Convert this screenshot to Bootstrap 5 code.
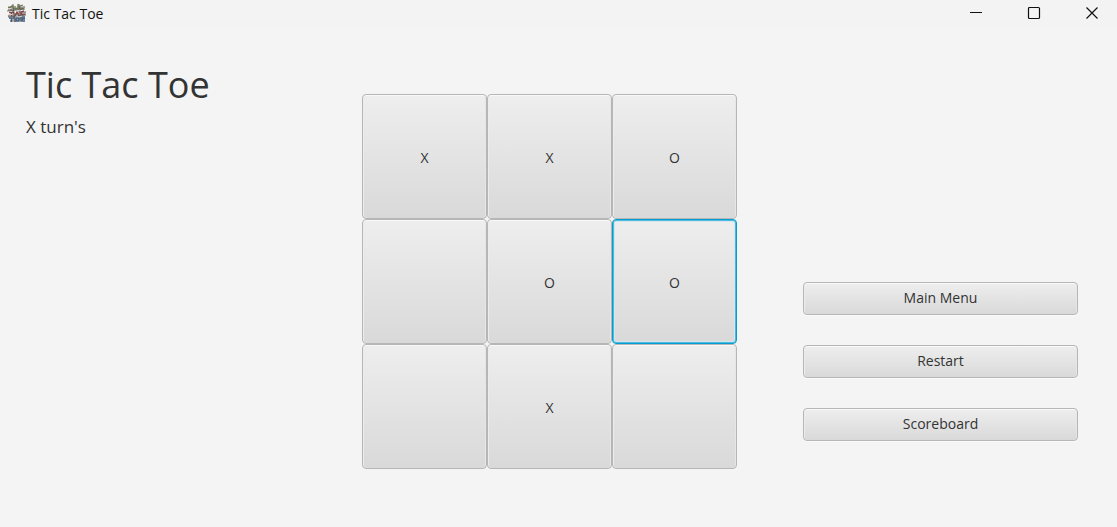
<!DOCTYPE html>
<html lang="en">
<head>
<meta charset="utf-8">
<meta name="viewport" content="width=device-width, initial-scale=1">
<title>Tic Tac Toe</title>
<link href="https://cdn.jsdelivr.net/npm/bootstrap@5.3.0/dist/css/bootstrap.min.css" rel="stylesheet">
<style>
  body { background: #f4f4f4; color: #333; font-family: "Open Sans", "Noto Sans", sans-serif; font-size: 14px; }
  .titlebar { background: #f3f3f3; height: 26px; color: #111; padding-left: 7px; }
  .titlebar-name { font-size: 14px; line-height: 24px; padding-top: 2px; margin-left: 5px; }
  .win-btns { gap: 8px; }
  .win-btn { width: 50px; height: 26px; color: #111; }
  .game { padding: 0 39px 0 26px; }
  .game-title { font-size: 36px; line-height: 50px; font-weight: 400; margin: 34px 0 0; }
  .turn { font-size: 17px; line-height: 24px; margin: 5px 0 0; }
  .board { grid-template-columns: repeat(3, 125px); grid-auto-rows: 125px; margin-top: 68px; margin-right: 66px; }
  .fx-btn {
    color: #333; font-size: 14px; line-height: 20px; padding: 0;
    border: 1px solid #b6b6b6; border-radius: 4px;
    background: linear-gradient(#eee, #d9d9d9);
    box-shadow: inset 0 1px #f9f9f9, inset 1px 0 #ececec, inset -1px 0 #e6e6e6, 0 1px #fafafa;
  }
  .board .fx-btn { padding-top: 2px; }
  .fx-btn:hover { background: linear-gradient(#f5f5f5, #e2e2e2); }
  .fx-btn.current { border-color: #039ed3; box-shadow: inset 0 0 0 1px #4fb9dc, inset 0 0 0 2px #d5e6ec; }
  .menu { width: 275px; gap: 30px; margin-top: 256px; }
  .menu .fx-btn { height: 33px; padding-bottom: 2px; }
</style>
</head>
<body>
<header class="titlebar d-flex align-items-center">
  <svg width="20" height="20" viewBox="0 0 20 20" aria-hidden="true">
    <path d="M1 7L18 4M1 13L19 9M3 18L18 15M5 2L8 19M11 1L14 18" stroke="#9a9795" stroke-width="2" fill="none"/>
    <path d="M1 4.500l5-1M4 4v3M8 3v3l3-.5V2.500M16 2l-3 1v3l4-.5" stroke="#6f7648" stroke-width="1.300" fill="none"/>
    <path d="M2 9.500h5M4.500 9.500v4M8 13l2-4 2 4M17 8l-3 1 .5 3 4-1" stroke="#8b4543" stroke-width="1.400" fill="none"/>
    <path d="M2 15h5M4.500 15v4M9 15h3v3H9zM18 14h-3v4h3M15 16h3" stroke="#3e5f80" stroke-width="1.400" fill="none"/>
    <path d="M0 8l18-2M1 14l18-2M6 1l2 18M12 1l2 18" stroke="#555" stroke-width=".8" fill="none"/>
    <path d="M2 6l3-1M10 8l3-1M3 12l3-1M12 14l3-1" stroke="#d5d0ce" stroke-width="1" fill="none"/>
  </svg>
  <span class="titlebar-name">Tic Tac Toe</span>
  <div class="win-btns d-flex ms-auto">
    <button type="button" class="win-btn btn rounded-0 border-0 p-0 d-flex align-items-center justify-content-center" aria-label="Minimize">
      <svg width="14" height="14" viewBox="0 0 14 14"><path d="M1 6.500h12" stroke="currentColor"/></svg>
    </button>
    <button type="button" class="win-btn btn rounded-0 border-0 p-0 d-flex align-items-center justify-content-center" aria-label="Maximize">
      <svg width="14" height="14" viewBox="0 0 14 14"><rect x="1.500" y="1.500" width="11" height="11" rx="1" fill="none" stroke="currentColor" stroke-width="1.200"/></svg>
    </button>
    <button type="button" class="win-btn btn rounded-0 border-0 p-0 d-flex align-items-center justify-content-center" aria-label="Close">
      <svg width="14" height="14" viewBox="0 0 14 14"><path d="M1.500 1.500l11 11M12.500 1.500l-11 11" stroke="currentColor" stroke-width="1.200"/></svg>
    </button>
  </div>
</header>
<main class="game d-flex align-items-start">
  <section class="flex-grow-1">
    <h1 class="game-title">Tic Tac Toe</h1>
    <p class="turn">X turn's</p>
  </section>
  <section class="board d-grid flex-shrink-0" aria-label="Board">
    <button type="button" class="fx-btn">X</button>
    <button type="button" class="fx-btn">X</button>
    <button type="button" class="fx-btn">O</button>
    <button type="button" class="fx-btn" aria-label="Empty"></button>
    <button type="button" class="fx-btn">O</button>
    <button type="button" class="fx-btn current">O</button>
    <button type="button" class="fx-btn" aria-label="Empty"></button>
    <button type="button" class="fx-btn">X</button>
    <button type="button" class="fx-btn" aria-label="Empty"></button>
  </section>
  <nav class="menu d-flex flex-column flex-shrink-0" aria-label="Game menu">
    <button type="button" class="fx-btn">Main Menu</button>
    <button type="button" class="fx-btn">Restart</button>
    <button type="button" class="fx-btn">Scoreboard</button>
  </nav>
</main>
<script src="https://cdn.jsdelivr.net/npm/bootstrap@5.3.0/dist/js/bootstrap.bundle.min.js"></script>
</body>
</html>
